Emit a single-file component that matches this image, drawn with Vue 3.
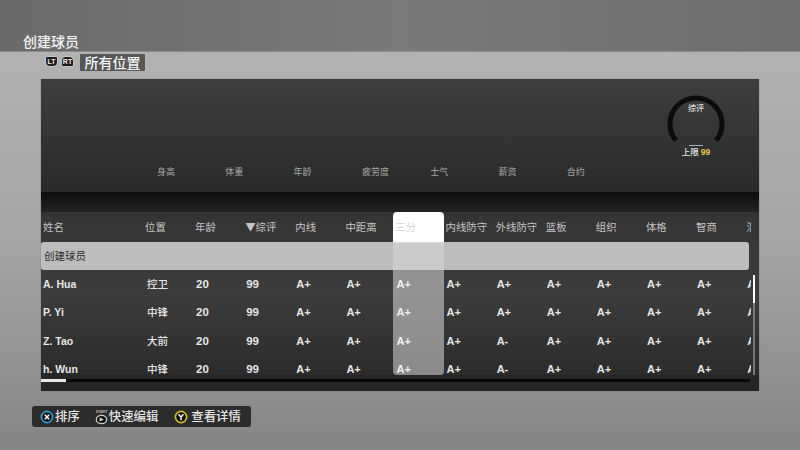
<script setup>
const stats = ['身高', '体重', '年龄', '疲劳度', '士气', '薪资', '合约']
const heads = ['姓名', '位置', '年龄', '▼综评', '内线', '中距离', '三分', '内线防守', '外线防守', '篮板', '组织', '体格', '智商', '潜力']
const players = [
  { name: 'A. Hua', pos: '控卫', grades: ['A+', 'A+', 'A+', 'A+', 'A+', 'A+', 'A+', 'A+', 'A+', 'A+'] },
  { name: 'P. Yi', pos: '中锋', grades: ['A+', 'A+', 'A+', 'A+', 'A+', 'A+', 'A+', 'A+', 'A+', 'A+'] },
  { name: 'Z. Tao', pos: '大前', grades: ['A+', 'A+', 'A+', 'A+', 'A-', 'A+', 'A+', 'A+', 'A+', 'A+'] },
  { name: 'h. Wun', pos: '中锋', grades: ['A+', 'A+', 'A+', 'A+', 'A-', 'A+', 'A+', 'A+', 'A+', 'A+'] }
]
</script>

<template>
  <div class="screen">
    <header class="top"><span class="title">创建球员</span></header>

    <div class="tabs">
      <span class="trigger">LT</span>
      <span class="trigger rt">RT</span>
      <span class="pill">所有位置</span>
    </div>

    <main class="panel">
      <section class="summary">
        <div class="gauge-row">
          <div class="gauge">
            <svg class="arc" width="60" height="52" viewBox="0 0 60 52">
              <path d="M10 45.5A26 26 0 1 1 50 45.5" fill="none" stroke="#0b0b0b" stroke-width="5" />
            </svg>
            <span class="gauge-label">综评</span>
            <span class="cap-line"></span>
            <span class="cap">上限 <b>99</b></span>
          </div>
        </div>
        <div class="stats">
          <span v-for="s in stats" :key="s">{{ s }}</span>
        </div>
      </section>

      <div class="band"></div>

      <section class="table">
        <div class="grid head">
          <span v-for="(h, i) in heads" :key="h" class="cell" :class="{ active: i === 6 }">{{ h }}</span>
        </div>
        <div class="selected">创建球员</div>
        <div class="body">
          <div v-for="p in players" :key="p.name" class="grid row">
            <span class="cell name">{{ p.name }}</span>
            <span class="cell pos">{{ p.pos }}</span>
            <span class="cell num">20</span>
            <span class="cell num">99</span>
            <span v-for="(g, i) in p.grades" :key="i" class="cell grade">{{ g }}</span>
          </div>
        </div>
        <div class="col-shade"></div>
        <div class="vscroll"><i></i></div>
      </section>

      <div class="hscroll"><i></i></div>
    </main>

    <footer class="hints">
      <svg class="btn" width="14" height="14" viewBox="0 0 14 14">
        <circle cx="7" cy="7" r="5.6" fill="#111" stroke="#2b9fd8" stroke-width="1.6" />
        <path d="M4.8 4.8l4.4 4.4M9.2 4.8l-4.4 4.4" stroke="#fff" stroke-width="1.5" />
      </svg>
      <span class="h1">排序</span>
      <svg class="start" width="13" height="16" viewBox="0 0 13 16">
        <text x="6.5" y="3.6" text-anchor="middle" class="start-text">START</text>
        <ellipse cx="6.5" cy="10.5" rx="5.2" ry="4.2" fill="#111" stroke="#ccc" stroke-width="1.3" />
        <path d="M4.6 8.4l4.2 2.1-4.2 2.1z" fill="#ddd" />
      </svg>
      <span class="h2">快速编辑</span>
      <svg class="btn y" width="14" height="14" viewBox="0 0 14 14">
        <circle cx="7" cy="7" r="5.6" fill="#111" stroke="#d8c21f" stroke-width="1.6" />
        <path d="M4.6 4.2L7 7.2l2.4-3M7 7.2v3" fill="none" stroke="#fff" stroke-width="1.4" />
      </svg>
      <span class="h3">查看详情</span>
    </footer>
  </div>
</template>

<style>
html, body { margin: 0; background: #999; }
</style>

<style scoped>
.screen {
  width: 800px;
  height: 450px;
  overflow: hidden;
  display: flex;
  flex-direction: column;
  font-family: "Noto Sans CJK SC", "Liberation Sans", sans-serif;
  background: linear-gradient(180deg, #b2b2b2 10%, #a4a4a4 55%, #858585 100%);
}
.top {
  height: 52px;
  flex: none;
  box-sizing: border-box;
  padding: 32px 0 0 23px;
  background: linear-gradient(90deg, #6a6a6a 0%, #7a7a7a 50%, #6e6e6e 100%);
  border-bottom: 1px solid #8a8a8a;
}
.title {
  display: block;
  font-size: 14px;
  font-weight: 500;
  line-height: 18px;
  color: #f2f2f2;
}
.tabs {
  height: 27px;
  flex: none;
  display: flex;
  align-items: flex-start;
  padding: 2px 0 0 46px;
  box-sizing: border-box;
}
.trigger {
  width: 11px;
  height: 9px;
  margin-top: 3px;
  margin-right: 5px;
  background: #1c1c1c;
  box-shadow: 0 0 0 .5px #ddd;
  border-radius: 1px 1px 4px 4px;
  font: bold 7px/9px "Liberation Sans", sans-serif;
  color: #eee;
  text-align: center;
}
.rt { margin-right: 7px; border-radius: 4px 4px 1px 1px; }
.pill {
  height: 17px;
  width: 65px;
  background: #575757;
  border-radius: 1px;
  color: #f4f4f4;
  font-size: 14px;
  font-weight: 500;
  line-height: 17px;
  text-align: center;
  white-space: nowrap;
}
.panel {
  width: 718px;
  height: 312px;
  flex: none;
  margin-left: 41px;
  background: #262626;
  display: flex;
  flex-direction: column;
  box-shadow: 0 0 1px #666;
}
.summary {
  height: 113px;
  flex: none;
  display: flex;
  flex-direction: column;
  background: linear-gradient(180deg, #3e3e3e, #2a2a2a);
}
.gauge-row {
  height: 86px;
  display: flex;
  justify-content: flex-end;
  padding: 16px 33px 0 0;
  box-sizing: border-box;
}
.gauge {
  position: relative;
  width: 60px;
  height: 70px;
}
.arc { display: block; }
.gauge-label {
  position: absolute;
  top: 7px;
  left: 0;
  width: 60px;
  text-align: center;
  font-size: 8px;
  font-weight: 500;
  line-height: 12px;
  color: #ddd;
}
.cap-line {
  position: absolute;
  top: 50px;
  left: 23px;
  width: 14px;
  height: 1px;
  background: #aaa;
}
.cap {
  position: absolute;
  top: 49px;
  left: 0;
  width: 60px;
  text-align: center;
  font-size: 8.5px;
  font-weight: 500;
  line-height: 14px;
  color: #e4e4e4;
  white-space: nowrap;
}
.cap b { color: #e8c848; font: bold 8.5px "Liberation Sans", sans-serif; }
.stats {
  display: grid;
  grid-template-columns: repeat(7, 68.3px);
  padding-left: 116px;
  font-size: 9px;
  line-height: 14px;
  color: #a8a8a8;
}
.band {
  height: 20px;
  flex: none;
  background: linear-gradient(180deg, #0e0e0e, #222);
}
.table {
  position: relative;
  height: 163px;
  flex: none;
  overflow: hidden;
  background: linear-gradient(180deg, #343434 0%, #3c3c3c 50%, #2b2b2b 100%);
}
.grid {
  display: grid;
  grid-template-columns: 102px repeat(13, 50.1px) 50px;
  width: 710px;
  overflow: hidden;
  white-space: nowrap;
}
.head {
  height: 31px;
  font-size: 10.4px;
  color: #c4c4c4;
}
.head .cell { padding-left: 2px; line-height: 30px; overflow: hidden; }
.head .active {
  background: #fff;
  color: #d2d2d2;
  border-radius: 4px 4px 0 0;
}
.selected {
  position: relative;
  z-index: 2;
  width: 708px;
  height: 28px;
  margin-top: -1px;
  box-sizing: border-box;
  padding-left: 3px;
  background: rgba(213, 213, 213, .85);
  border-radius: 3px;
  color: #2c2c2c;
  font-size: 10.5px;
  line-height: 27px;
}
.body { height: 105px; overflow: hidden; width: 710px; }
.row {
  height: 28.4px;
  font: bold 10.5px/28.4px "Liberation Sans", "Noto Sans CJK SC", sans-serif;
  color: #e6e6e6;
}
.row .cell { padding-left: 2px; overflow: hidden; }
.row .pos { padding-left: 4px; font-weight: 500; }
.row .num { padding-left: 3px; font-size: 11.5px; }
.row .grade { padding-left: 3px; font-size: 11px; }
.col-shade {
  position: absolute;
  left: 352px;
  top: 31px;
  width: 51px;
  height: 132px;
  background: rgba(255, 255, 255, .45);
  border-radius: 0 0 4px 4px;
}
.vscroll {
  position: absolute;
  left: 712px;
  top: 63px;
  width: 2px;
  height: 100px;
  background: #777;
}
.vscroll i { display: block; height: 28px; background: #fff; }
.hscroll {
  height: 3px;
  width: 709px;
  flex: none;
  margin-top: 4px;
  background: #080808;
}
.hscroll i { display: block; width: 25px; height: 3px; background: #e8e8e8; }
.hints {
  width: 219px;
  height: 21px;
  flex: none;
  margin: 15px 0 0 32px;
  box-sizing: border-box;
  display: flex;
  align-items: center;
  padding-left: 8px;
  background: #2c2c2c;
  border-radius: 3px;
  color: #e4e4e4;
  font-size: 12.4px;
  font-weight: 500;
  line-height: 21px;
  white-space: nowrap;
}
.btn, .start { flex: none; }
.start-text { font: bold 3.6px "Liberation Sans", sans-serif; fill: #bbb; }
.h1 { margin-left: 1px; }
.start { margin-left: 15px; }
.h2 { margin-left: 1px; }
.y { margin-left: 16px; }
.h3 { margin-left: 3px; }
</style>
